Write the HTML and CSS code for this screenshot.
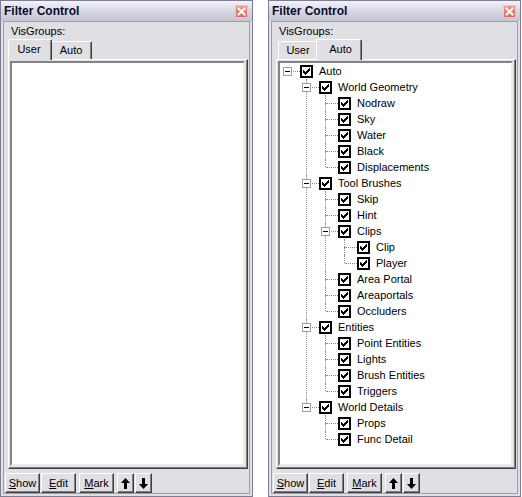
FILE: index.html
```html
<!DOCTYPE html>
<html>
<head>
<meta charset="utf-8">
<link rel="stylesheet" href="styles.css">
</head>
<body>
<svg class="defs" width="0" height="0">
  <defs>
    <symbol id="cb" viewBox="0 0 13 13">
      <rect x="1" y="1" width="11" height="11" fill="#fff" stroke="#000" stroke-width="2"/>
      <path d="M3 5h1v3h-1z M4 6h1v3h-1z M5 7h1v3h-1z M6 6h1v3h-1z M7 5h1v3h-1z M8 4h1v3h-1z M9 3h1v3h-1z" fill="#000"/>
    </symbol>
    <symbol id="x" viewBox="0 0 13 13">
      <path d="M3.5 3.5 L9.5 9.5 M9.5 3.5 L3.5 9.5" stroke="#fff" stroke-width="2" stroke-linecap="square"/>
    </symbol>
    <symbol id="up" viewBox="0 0 9 11">
      <path d="M4.5 0 L9 5 L6 5 L6 11 L3 11 L3 5 L0 5 Z" fill="#000"/>
    </symbol>
    <symbol id="down" viewBox="0 0 9 11">
      <path d="M4.5 11 L9 6 L6 6 L6 0 L3 0 L3 6 L0 6 Z" fill="#000"/>
    </symbol>
  </defs>
</svg>
<div class="desk">
  <section class="panel">
    <header class="titlebar">
      <span class="title">Filter Control</span>
      <span class="close"><svg width="13" height="13"><use href="#x"/></svg></span>
    </header>
    <div class="body">
      <div class="label">VisGroups:</div>
      <div class="tabs">
        <div class="tab tab-user active">User</div>
        <div class="tab tab-auto">Auto</div>
      </div>
      <div class="page">
        <div class="list"></div>
      </div>
      <div class="buttons">
        <button class="btn btn-text"><u>S</u>how</button>
        <button class="btn btn-text"><u>E</u>dit</button>
        <button class="btn btn-text btn-gap"><u>M</u>ark</button>
        <button class="btn btn-arrow btn-gap2"><svg width="9" height="11"><use href="#up"/></svg></button>
        <button class="btn btn-arrow"><svg width="9" height="11"><use href="#down"/></svg></button>
      </div>
    </div>
  </section>

  <section class="panel">
    <header class="titlebar">
      <span class="title">Filter Control</span>
      <span class="close"><svg width="13" height="13"><use href="#x"/></svg></span>
    </header>
    <div class="body">
      <div class="label">VisGroups:</div>
      <div class="tabs">
        <div class="tab tab-user">User</div>
        <div class="tab tab-auto active">Auto</div>
      </div>
      <div class="page">
        <div class="list">
          <ul class="tree">
            <li><div class="row"><span class="conn"><span class="exp"></span></span><svg class="cb"><use href="#cb"/></svg><span class="txt">Auto</span></div>
              <ul>
                <li><div class="row"><span class="conn"><span class="exp"></span></span><svg class="cb"><use href="#cb"/></svg><span class="txt">World Geometry</span></div>
                  <ul>
                    <li><div class="row"><span class="conn"></span><svg class="cb"><use href="#cb"/></svg><span class="txt">Nodraw</span></div></li>
                    <li><div class="row"><span class="conn"></span><svg class="cb"><use href="#cb"/></svg><span class="txt">Sky</span></div></li>
                    <li><div class="row"><span class="conn"></span><svg class="cb"><use href="#cb"/></svg><span class="txt">Water</span></div></li>
                    <li><div class="row"><span class="conn"></span><svg class="cb"><use href="#cb"/></svg><span class="txt">Black</span></div></li>
                    <li><div class="row"><span class="conn"></span><svg class="cb"><use href="#cb"/></svg><span class="txt">Displacements</span></div></li>
                  </ul>
                </li>
                <li><div class="row"><span class="conn"><span class="exp"></span></span><svg class="cb"><use href="#cb"/></svg><span class="txt">Tool Brushes</span></div>
                  <ul>
                    <li><div class="row"><span class="conn"></span><svg class="cb"><use href="#cb"/></svg><span class="txt">Skip</span></div></li>
                    <li><div class="row"><span class="conn"></span><svg class="cb"><use href="#cb"/></svg><span class="txt">Hint</span></div></li>
                    <li><div class="row"><span class="conn"><span class="exp"></span></span><svg class="cb"><use href="#cb"/></svg><span class="txt">Clips</span></div>
                      <ul>
                        <li><div class="row"><span class="conn"></span><svg class="cb"><use href="#cb"/></svg><span class="txt">Clip</span></div></li>
                        <li><div class="row"><span class="conn"></span><svg class="cb"><use href="#cb"/></svg><span class="txt">Player</span></div></li>
                      </ul>
                    </li>
                    <li><div class="row"><span class="conn"></span><svg class="cb"><use href="#cb"/></svg><span class="txt">Area Portal</span></div></li>
                    <li><div class="row"><span class="conn"></span><svg class="cb"><use href="#cb"/></svg><span class="txt">Areaportals</span></div></li>
                    <li><div class="row"><span class="conn"></span><svg class="cb"><use href="#cb"/></svg><span class="txt">Occluders</span></div></li>
                  </ul>
                </li>
                <li><div class="row"><span class="conn"><span class="exp"></span></span><svg class="cb"><use href="#cb"/></svg><span class="txt">Entities</span></div>
                  <ul>
                    <li><div class="row"><span class="conn"></span><svg class="cb"><use href="#cb"/></svg><span class="txt">Point Entities</span></div></li>
                    <li><div class="row"><span class="conn"></span><svg class="cb"><use href="#cb"/></svg><span class="txt">Lights</span></div></li>
                    <li><div class="row"><span class="conn"></span><svg class="cb"><use href="#cb"/></svg><span class="txt">Brush Entities</span></div></li>
                    <li><div class="row"><span class="conn"></span><svg class="cb"><use href="#cb"/></svg><span class="txt">Triggers</span></div></li>
                  </ul>
                </li>
                <li><div class="row"><span class="conn"><span class="exp"></span></span><svg class="cb"><use href="#cb"/></svg><span class="txt">World Details</span></div>
                  <ul>
                    <li><div class="row"><span class="conn"></span><svg class="cb"><use href="#cb"/></svg><span class="txt">Props</span></div></li>
                    <li><div class="row"><span class="conn"></span><svg class="cb"><use href="#cb"/></svg><span class="txt">Func Detail</span></div></li>
                  </ul>
                </li>
              </ul>
            </li>
          </ul>
        </div>
      </div>
      <div class="buttons">
        <button class="btn btn-text"><u>S</u>how</button>
        <button class="btn btn-text"><u>E</u>dit</button>
        <button class="btn btn-text btn-gap"><u>M</u>ark</button>
        <button class="btn btn-arrow btn-gap2"><svg width="9" height="11"><use href="#up"/></svg></button>
        <button class="btn btn-arrow"><svg width="9" height="11"><use href="#down"/></svg></button>
      </div>
    </div>
  </section>
</div>
</body>
</html>
```

FILE: styles.css
```css
html, body {
  margin: 0;
  padding: 0;
  background: #fff;
}
body {
  font-family: "Liberation Sans", Arial, sans-serif;
  font-size: 11px;
  color: #000;
}
.defs {
  position: absolute;
  width: 0;
  height: 0;
}
.desk {
  display: flex;
  gap: 15px;
}
.panel {
  width: 253px;
  height: 497px;
  box-sizing: border-box;
  border: 1px solid #7c7c99;
  background: #e0dfe3;
  display: flex;
  flex-direction: column;
}
.titlebar {
  height: 20px;
  flex: none;
  display: flex;
  align-items: center;
  justify-content: space-between;
  padding: 0 4px 0 3px;
  background: linear-gradient(#f2f2f7, #d3d3df 60%, #c6c6d4);
}
.title {
  font-weight: bold;
  font-size: 12px;
  color: #0b0b2e;
  letter-spacing: 0;
}
.close {
  width: 13px;
  height: 13px;
  box-sizing: border-box;
  border-radius: 2px;
  background: linear-gradient(#f09a90, #e0645a);
  box-shadow: inset 0 0 0 1px #f6c4bd;
  display: flex;
  margin-top: 1px;
}
.body {
  flex: 1;
  margin: 0 2px 2px;
  border: 1px solid #9c9cb4;
  display: flex;
  flex-direction: column;
  padding: 0 1px 0 4px;
  min-height: 0;
}
.label {
  height: 17px;
  line-height: 14px;
  padding-top: 2px;
  box-sizing: border-box;
  margin-left: 3px;
}
.tabs {
  height: 20px;
  flex: none;
  display: flex;
  align-items: flex-end;
  padding-left: 2px;
}
.tab {
  height: 18px;
  box-sizing: border-box;
  border-top: 1px solid #fff;
  border-left: 1px solid #fff;
  border-right: 1px solid #404040;
  border-radius: 2px 2px 0 0;
  box-shadow: inset -1px 0 #808080;
  padding-top: 2px;
  line-height: 13px;
  text-align: center;
}
.tab-user { width: 40px; }
.tab-auto { width: 42px; }
.tab.active {
  position: relative;
  z-index: 1;
  height: 21px;
  margin: 0 -2px -1px;
  padding-right: 2px;
  background: #e0dfe3;
  padding-top: 3px;
}
.tab-user.active { width: 44px; }
.tab-auto.active { width: 46px; padding-right: 0; padding-left: 3px; }
.page {
  flex: 1;
  min-height: 0;
  box-sizing: border-box;
  border-top: 1px solid #fff;
  border-left: 1px solid #fff;
  border-right: 1px solid #404040;
  border-bottom: 1px solid #404040;
  box-shadow: inset -1px -1px #808080;
  padding: 1px 2px 2px 1px;
  display: flex;
}
.list {
  flex: 1;
  background: #fff;
  border-top: 2px solid #828282;
  border-left: 2px solid #828282;
  border-right: 2px solid #ecebe6;
  border-bottom: 2px solid #ecebe6;
  overflow: hidden;
}
.tree, .tree ul {
  list-style: none;
  margin: 0;
  padding: 0;
}
.tree {
  padding-left: 3px;
}
.tree ul {
  padding-left: 19px;
}
.tree li {
  position: relative;
}
.tree ul li::before {
  content: "";
  position: absolute;
  left: 4px;
  top: 0;
  height: 8px;
  border-left: 1px dotted #8c8c8c;
}
.tree ul li:not(:last-child)::after {
  content: "";
  position: absolute;
  left: 4px;
  top: 8px;
  bottom: 0;
  border-left: 1px dotted #8c8c8c;
}
.row {
  height: 16px;
  display: flex;
  align-items: center;
  position: relative;
}
.conn {
  position: relative;
  width: 17px;
  height: 16px;
  flex: none;
}
.conn::after {
  content: "";
  position: absolute;
  left: 5px;
  right: 0;
  top: 8px;
  border-top: 1px dotted #8c8c8c;
}
.exp {
  position: absolute;
  left: 0;
  top: 4px;
  width: 9px;
  height: 9px;
  box-sizing: border-box;
  border: 1px solid #a09f98;
  background: #fff;
  z-index: 2;
}
.exp::before {
  content: "";
  position: absolute;
  left: 1px;
  top: 3px;
  width: 5px;
  height: 1px;
  background: #000;
}
.cb {
  width: 13px;
  height: 13px;
  flex: none;
  position: relative;
  z-index: 2;
}
.txt {
  margin-left: 6px;
  white-space: nowrap;
  line-height: 13px;
}
.buttons {
  height: 20px;
  flex: none;
  margin: 4px 0 0 -3px;
  display: flex;
}
.btn {
  height: 20px;
  box-sizing: border-box;
  margin: 0;
  padding: 0;
  font: inherit;
  color: #000;
  background: #e0dfe3;
  border-top: 1px solid #fff;
  border-left: 1px solid #fff;
  border-right: 1px solid #404040;
  border-bottom: 1px solid #404040;
  box-shadow: inset -1px -1px #808080;
  display: flex;
  align-items: center;
  justify-content: center;
  line-height: 13px;
}
.btn-text {
  width: 35px;
  margin-right: 1px;
}
.btn-gap {
  margin-left: 2px;
}
.btn-arrow {
  width: 17px;
  margin-right: 1px;
}
.btn-gap2 {
  margin-left: 2px;
}
.btn u {
  text-decoration: underline;
  text-underline-offset: 1px;
}
```
